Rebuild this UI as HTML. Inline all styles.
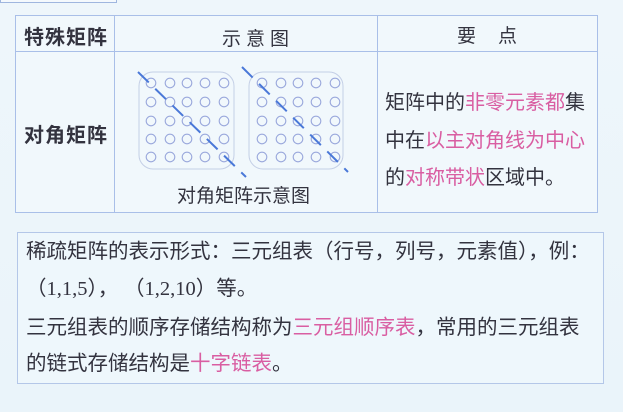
<!DOCTYPE html>
<html><head><meta charset="utf-8"><style>
body{margin:0;width:623px;height:412px;overflow:hidden;background:linear-gradient(180deg,#eef6fb,#eaf4fa);font-family:"Liberation Sans","Noto Sans CJK SC",sans-serif;color:#33333f;position:relative}
.a{position:absolute;white-space:nowrap}
.p{color:#d95ea2}
.l{position:absolute;background:#a9bfe8}
</style></head><body>
<div class="a" style="left:0;top:-2px;width:115px;height:4px;border:1px solid #9fb6df;border-top:none;background:#f4f9fd"></div>
<div style="position:absolute;left:15px;top:15px;width:581px;height:196px;border:1px solid #a9bfe8;background:#f1f8fc"></div>
<div class="l" style="left:15px;top:51px;width:582px;height:1px"></div>
<div class="l" style="left:114px;top:15px;width:1px;height:197px"></div>
<div class="l" style="left:377px;top:15px;width:1px;height:197px"></div>
<div class="a" style="left:24px;top:21px;font-size:20px;font-weight:bold;letter-spacing:1px">特殊矩阵</div>
<div class="a" style="left:222px;top:24px;font-size:19px;letter-spacing:5px">示意图</div>
<div class="a" style="left:457px;top:21px;font-size:19px;letter-spacing:22px">要点</div>
<div class="a" style="left:24px;top:119px;font-size:20px;font-weight:bold;letter-spacing:1px">对角矩阵</div>
<div class="a" style="left:177px;top:181px;font-size:19px">对角矩阵示意图</div>
<div class="a" style="left:385px;top:85px;font-size:20px;line-height:37.5px">矩阵中的<span class="p">非零元素都</span>集<br>中在<span class="p">以主对角线为中心</span><br>的<span class="p">对称带状</span>区域中。</div>
<svg class="a" style="left:0;top:0" width="623" height="230">
<g fill="none" stroke="#c4cfe6" stroke-width="1"><rect x="139" y="72" width="95" height="97" rx="14"/><rect x="249" y="72" width="94" height="97" rx="14"/></g>
<g fill="none" stroke="#9aa8dc" stroke-width="1.1">
<g id="c"><circle cx="151" cy="83" r="4.8"/><circle cx="170" cy="83" r="4.8"/><circle cx="187" cy="83" r="4.8"/><circle cx="205" cy="83" r="4.8"/><circle cx="224" cy="83" r="4.8"/></g>
<use href="#c" y="19"/><use href="#c" y="38"/><use href="#c" y="56"/><use href="#c" y="74"/>
<g id="d" transform="translate(111,0)"><use href="#c"/><use href="#c" y="19"/><use href="#c" y="38"/><use href="#c" y="56"/><use href="#c" y="74"/></g>
</g>
<g stroke="#4a78d8" stroke-width="2" stroke-dasharray="15,9">
<line x1="138" y1="72" x2="246" y2="177"/>
<line x1="242" y1="67" x2="348" y2="172"/>
</g>
</svg>
<div style="position:absolute;left:17px;top:232px;width:585px;height:150px;border:1px solid #b4c7e8;background:#eef7fc"></div>
<div class="a" style="left:26px;top:233px;font-size:20.5px;line-height:37px">稀疏矩阵的表示形式：三元组表（行号，列号，元素值），例：<br>（<span style="font-family:'Liberation Serif',serif">1,1,5</span>）， （<span style="font-family:'Liberation Serif',serif">1,2,10</span>）等。</div>
<div class="a" style="left:26px;top:310px;font-size:20.5px;line-height:36px">三元组表的顺序存储结构称为<span class="p">三元组顺序表</span>，常用的三元组表<br>的链式存储结构是<span class="p">十字链表</span>。</div>
</body></html>
